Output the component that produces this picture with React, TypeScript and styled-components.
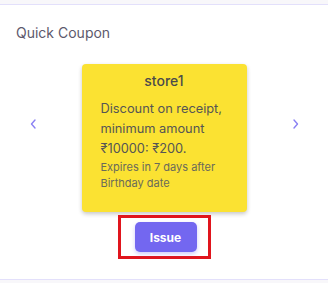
import styled, { createGlobalStyle } from "styled-components";

const GlobalStyle = createGlobalStyle`
  html, body {
    margin: 0;
    padding: 0;
    background: #f8f7fa;
  }
  body {
    font-family: Inter, "Noto Sans", sans-serif;
  }
`;

const Page = styled.div`
  padding-top: 4px;
  height: 283px;
  box-sizing: border-box;
  overflow: hidden;
`;

const Panel = styled.section`
  background: #fff;
  border-top: 1px solid #e3e0fb;
  border-bottom: 1px solid #e3e0fb;
  height: 276px;
  box-sizing: border-box;
  padding: 18px 16px 0;
`;

const Title = styled.h4`
  margin: 0;
  font-size: 14px;
  line-height: 20px;
  font-weight: 400;
  color: #5d596c;
`;

const Carousel = styled.div`
  margin-top: 21px;
  display: flex;
  align-items: center;
  justify-content: center;
  gap: 45px;
`;

const Arrow = styled.button`
  border: none;
  background: none;
  padding: 0;
  width: 8px;
  height: 12px;
  display: flex;
  align-items: center;
  justify-content: center;
  cursor: pointer;
  margin-top: -76px;
`;

const Slide = styled.div`
  display: flex;
  flex-direction: column;
  align-items: center;
`;

const Coupon = styled.div`
  width: 165px;
  height: 148px;
  box-sizing: border-box;
  background: #fbe232;
  border-radius: 4px;
  box-shadow: 0 2px 4px rgba(0, 0, 0, 0.22);
  padding: 8px 8px 0 19px;
`;

const Store = styled.div`
  text-align: center;
  margin-left: -11px;
  font-size: 14px;
  line-height: 18px;
  font-weight: 500;
  color: #4b4b4b;
`;

const Desc = styled.p`
  margin: 9px 0 0;
  font-size: 12.8px;
  line-height: 20px;
  font-weight: 400;
  color: #555;
`;

const Expiry = styled.p`
  margin: 0;
  font-size: 11px;
  line-height: 16px;
  color: #6a6a5a;
`;

const Highlight = styled.div`
  margin-top: 3px;
  border: 3px solid #e0151d;
  padding: 4px 11px 4px 14px;
`;

const IssueButton = styled.button`
  width: 62px;
  height: 30px;
  border: none;
  border-radius: 5px;
  background: #7367f0;
  color: #fff;
  font-family: Inter, "Noto Sans", sans-serif;
  font-size: 12px;
  font-weight: 700;
  box-shadow: 0 2px 4px rgba(115, 103, 240, 0.35);
  cursor: pointer;
`;

const Chevron = ({ dir }: { dir: "left" | "right" }) => (
  <svg width="6" height="10" viewBox="0 0 6 10">
    <path
      d={dir === "left" ? "M5 1 L1.5 5 L5 9" : "M1 1 L4.5 5 L1 9"}
      fill="none"
      stroke="#8a80f3"
      strokeWidth="1.4"
      strokeLinecap="round"
      strokeLinejoin="round"
    />
  </svg>
);

export default function App() {
  return (
    <>
      <GlobalStyle />
      <Page>
        <Panel>
          <Title>Quick Coupon</Title>
          <Carousel>
            <Arrow aria-label="previous">
              <Chevron dir="left" />
            </Arrow>
            <Slide>
              <Coupon>
                <Store>store1</Store>
                <Desc>
                  Discount on receipt, minimum amount ₹10000: ₹200.
                </Desc>
                <Expiry>Expires in 7 days after Birthday date</Expiry>
              </Coupon>
              <Highlight>
                <IssueButton>Issue</IssueButton>
              </Highlight>
            </Slide>
            <Arrow aria-label="next">
              <Chevron dir="right" />
            </Arrow>
          </Carousel>
        </Panel>
      </Page>
    </>
  );
}
